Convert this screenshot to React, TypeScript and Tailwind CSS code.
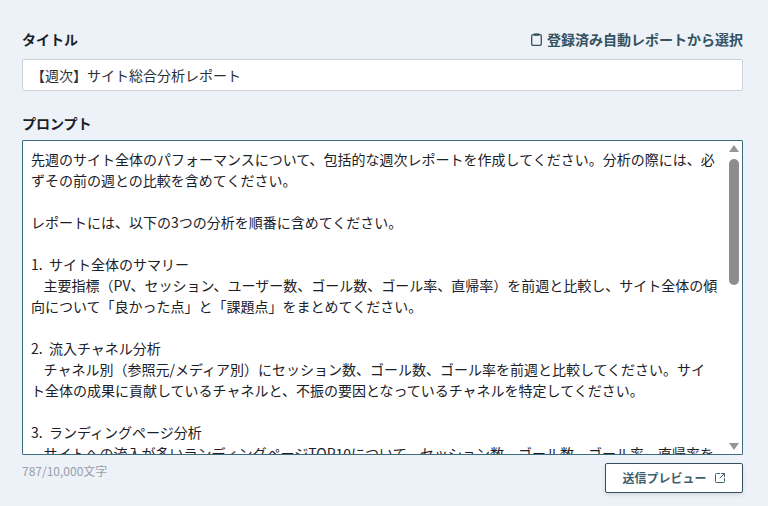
import { SquareArrowOutUpRight } from "lucide-react";

const promptText = `先週のサイト全体のパフォーマンスについて、包括的な週次レポートを作成してください。分析の際には、必ずその前の週との比較を含めてください。

レポートには、以下の3つの分析を順番に含めてください。

1.  サイト全体のサマリー
    主要指標（PV、セッション、ユーザー数、ゴール数、ゴール率、直帰率）を前週と比較し、サイト全体の傾向について「良かった点」と「課題点」をまとめてください。

2.  流入チャネル分析
    チャネル別（参照元/メディア別）にセッション数、ゴール数、ゴール率を前週と比較してください。サイト全体の成果に貢献しているチャネルと、不振の要因となっているチャネルを特定してください。

3.  ランディングページ分析
    サイトへの流入が多いランディングページTOP10について、セッション数、ゴール数、ゴール率、直帰率を`;

export default function App() {
  return (
    <div
      className="w-[768px] h-[506px] overflow-hidden bg-[#edf1f8] pl-[22px] pr-[25px] pt-[29px]"
      style={{ fontFamily: '"Noto Sans CJK JP", "Noto Sans", sans-serif' }}
    >
      <div className="flex items-center justify-between h-[20px]">
        <label className="text-[14px] font-bold text-[#1a1f26]">タイトル</label>
        <button className="flex items-center gap-[5px] text-[14px] font-bold text-[#34525f]">
          <svg viewBox="0 0 11 13" className="w-[11px] h-[13px]" fill="none">
            <rect x="0.7" y="1.6" width="9.6" height="10.7" rx="1.3" stroke="#34525f" strokeWidth="1.3" />
            <rect x="2.8" y="0.4" width="5.4" height="2.4" fill="#34525f" />
          </svg>
          登録済み自動レポートから選択
        </button>
      </div>
      <input
        readOnly
        value="【週次】サイト総合分析レポート"
        className="mt-[10px] block w-full h-[32px] bg-white border border-[#cdd2da] rounded-[2px] px-[8px] text-[14px] text-[#2a2f36] outline-none"
      />

      <label className="block mt-[22px] h-[20px] text-[14px] font-bold text-[#1a1f26]">プロンプト</label>
      <div className="relative mt-[7px] h-[315px] bg-white border border-[#3d6b80] rounded-[1px] overflow-hidden">
        <div className="pl-[8px] pr-[24px] pt-[8px] text-[14px] leading-[21px] whitespace-pre-wrap text-[#1c2026]">
          {promptText}
        </div>
        <div className="absolute right-0 top-0 bottom-0 w-[16px] flex flex-col items-center bg-white">
          <div className="mt-[4px] w-0 h-0 border-x-[5px] border-x-transparent border-b-[7px] border-b-[#989498]" />
          <div className="mt-[7px] w-[10px] h-[126px] rounded-[5px] bg-[#8f8b8f]" />
          <div className="mt-auto mb-[4px] w-0 h-0 border-x-[5px] border-x-transparent border-t-[7px] border-t-[#989498]" />
        </div>
      </div>

      <div className="flex items-start justify-between mt-[8px]">
        <span className="text-[12px] leading-[16px] text-[#9aa0aa]">787/10,000文字</span>
        <button className="flex items-center justify-center gap-[7px] w-[138px] h-[30px] bg-white border border-[#2f5163] rounded-[2px] text-[12px] font-bold text-[#40606e] shadow-[0_2px_4px_rgba(0,0,0,0.1)]">
          送信プレビュー
          <SquareArrowOutUpRight className="w-[12px] h-[12px]" strokeWidth={2} />
        </button>
      </div>
    </div>
  );
}
